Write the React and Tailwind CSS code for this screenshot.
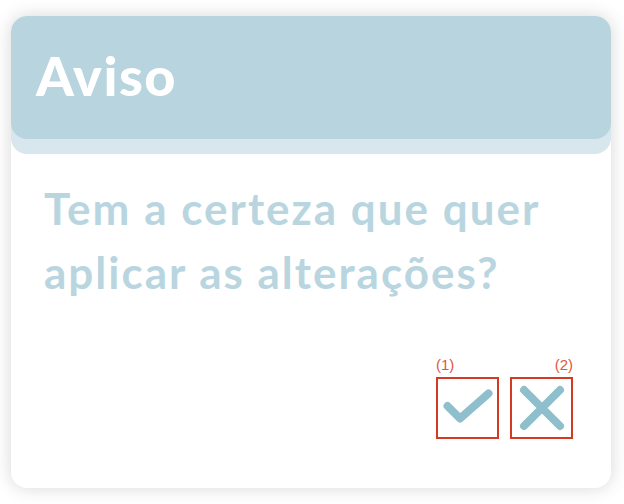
const Check = () => (
  <svg width="50" height="36" viewBox="0 0 50 36" fill="none">
    <path d="M4.5 17 L17 29.5 L45.5 4.5" stroke="#8fbfcd" strokeWidth="8" strokeLinecap="round" strokeLinejoin="round" />
  </svg>
);

const Cross = () => (
  <svg width="46" height="46" viewBox="0 0 46 46" fill="none">
    <path d="M5 5 L41 41 M41 5 L5 41" stroke="#8fbfcd" strokeWidth="8" strokeLinecap="round" />
  </svg>
);

export default function App() {
  return (
    <div className="w-[624px] h-[504px] bg-white pt-[16px] pl-[11px] pr-[13px]" style={{ fontFamily: "'Lato', 'Liberation Sans', sans-serif" }}>
      <div className="h-[472px] bg-white rounded-2xl shadow-[0_0_18px_rgba(0,0,0,0.16)] flex flex-col">
        {/* Header */}
        <div className="h-[123px] rounded-2xl bg-[#b8d5df] shadow-[0_15px_0_0_#d8e7ed] flex items-center pl-[25px] pb-[4px]">
          <h1 className="text-[54px] font-black text-white tracking-[1.5px]">Aviso</h1>
        </div>

        {/* Message */}
        <p className="mt-[37px] px-[33px] text-[44px] leading-[64px] font-bold text-[#b9d6e0] tracking-[2px]">
          Tem a certeza que quer aplicar as alterações?
        </p>

        {/* Actions */}
        <div className="mt-auto mb-[49px] flex justify-end gap-[11px] pr-[38px]">
          <div className="relative">
            <span className="absolute -top-[23px] left-0 text-[15px] text-[#e0583c]" style={{ fontFamily: "'Liberation Sans', sans-serif" }}>(1)</span>
            <button className="w-[63px] h-[62px] border-2 border-[#d33a22] flex items-center justify-center pb-[3px]">
              <Check />
            </button>
          </div>
          <div className="relative">
            <span className="absolute -top-[23px] right-0 text-[15px] text-[#e0583c]" style={{ fontFamily: "'Liberation Sans', sans-serif" }}>(2)</span>
            <button className="w-[63px] h-[62px] border-2 border-[#d33a22] flex items-center justify-center">
              <Cross />
            </button>
          </div>
        </div>
      </div>
    </div>
  );
}
